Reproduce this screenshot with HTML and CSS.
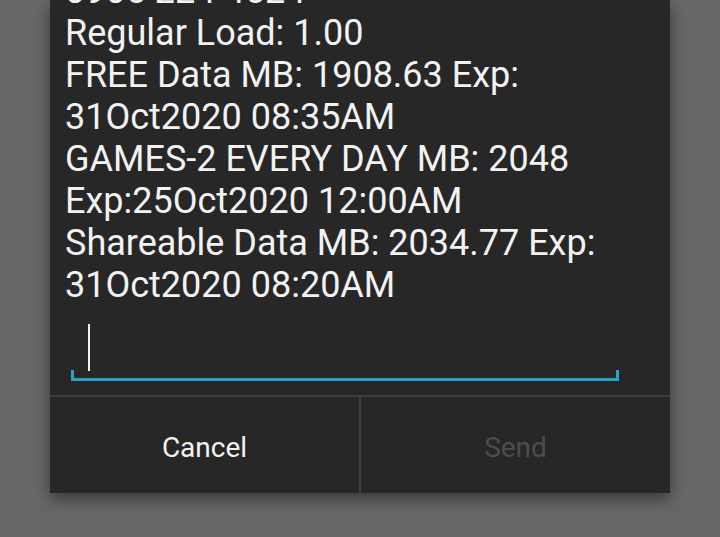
FILE: index.html
```html
<!DOCTYPE html>
<html lang="en">
<head>
  <meta charset="UTF-8">
  <meta name="viewport" content="width=device-width, initial-scale=1.0">
  <title>USSD Reply</title>
  <link rel="stylesheet" href="styles.css">
</head>
<body>
  <!-- USSD response dialog -->
  <div class="dialog">
    <div class="message">
      <p>0905 224 4524</p>
      <p>Regular Load: 1.00</p>
      <p>FREE Data MB: 1908.63 Exp:</p>
      <p>31Oct2020 08:35AM</p>
      <p>GAMES-2 EVERY DAY MB: 2048</p>
      <p>Exp:25Oct2020 12:00AM</p>
      <p>Shareable Data MB: 2034.77 Exp:</p>
      <p>31Oct2020 08:20AM</p>
    </div>

    <div class="reply-field">
      <span class="cursor"></span>
    </div>

    <div class="actions">
      <button class="action">Cancel</button>
      <button class="action disabled">Send</button>
    </div>
  </div>
</body>
</html>
```

FILE: styles.css
```css
/* Dimmed screen behind the dialog */
body {
  margin: 0;
  height: 537px;
  overflow: hidden;
  background-color: #676767;
  font-family: Roboto, "Noto Sans", sans-serif;
}

.dialog {
  width: 620px;
  height: 493px;
  margin-left: 50px;
  background-color: #272727;
  box-shadow: 0 6px 14px rgba(0, 0, 0, 0.45);
  display: flex;
  flex-direction: column;
}

/* Message text, scrolled so the first line is cut off */
.message {
  margin-top: -30px;
  padding: 0 15px;
  color: #f2f2f2;
  font-size: 36px;
  line-height: 42px;
}

.message p {
  margin: 0;
}

/* Text input with holo underline */
.reply-field {
  position: relative;
  margin: 16px 51px 0 21px;
  height: 56px;
  border-bottom: 3px solid #2e9fc6;
}

.reply-field::before,
.reply-field::after {
  content: "";
  position: absolute;
  bottom: 0;
  width: 3px;
  height: 8px;
  background-color: #2e9fc6;
}

.reply-field::before {
  left: 0;
}

.reply-field::after {
  right: 0;
}

.cursor {
  position: absolute;
  left: 17px;
  top: 2px;
  width: 2px;
  height: 47px;
  background-color: #f2f2f2;
}

/* Button bar */
.actions {
  margin-top: auto;
  height: 96px;
  display: flex;
  border-top: 2px solid #3d3d3d;
}

.action {
  flex: 1;
  background-color: #272727;
  border: none;
  color: #f2f2f2;
  font-family: Roboto, "Noto Sans", sans-serif;
  font-size: 28px;
  padding: 4px 0 0;
}

.action + .action {
  border-left: 2px solid #3d3d3d;
}

.action.disabled {
  color: #4c4c4c;
}
```
